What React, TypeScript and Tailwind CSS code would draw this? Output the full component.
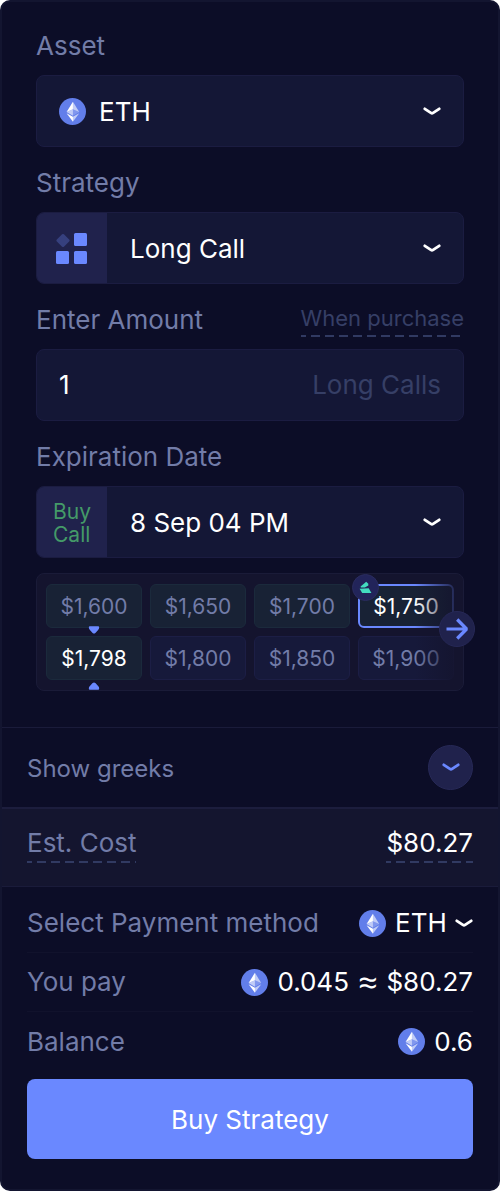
import { useState } from "react";
import type { ReactNode } from "react";

const STRIKES = [
  { price: "$1,600", tone: "green" },
  { price: "$1,650", tone: "green" },
  { price: "$1,700", tone: "green" },
  { price: "$1,750", tone: "active" },
  { price: "$1,798", tone: "spot" },
  { price: "$1,800", tone: "blue" },
  { price: "$1,850", tone: "blue" },
  { price: "$1,900", tone: "blue" },
];

const TONES: Record<string, string> = {
  green: "border border-[#1b2a3c] bg-[#182235] text-[#727ca8]",
  spot: "border border-[#1b2a3c] bg-[#182235] text-white",
  active: "border-2 border-[#6a88ff] bg-[#182235] text-white",
  blue: "border border-[#1c1e45] bg-[#16193a] text-[#727ca8]",
};

function EthIcon() {
  return (
    <svg viewBox="0 0 32 32" className="size-[27px] shrink-0" aria-hidden="true">
      <circle cx="16" cy="16" r="16" fill="#627eea" />
      <g fill="#fff">
        <path fillOpacity=".602" d="M16.498 4.5v8.87l7.497 3.35z" />
        <path d="M16.498 4.5L9 16.72l7.498-3.35z" />
        <path fillOpacity=".602" d="M16.498 22.3v5.9L24 18z" />
        <path d="M16.498 28.2v-5.9L9 18z" />
        <path fillOpacity=".2" d="M16.498 21.073l7.497-4.353-7.497-3.348z" />
        <path fillOpacity=".602" d="M9 16.72l7.498 4.353v-7.701z" />
      </g>
    </svg>
  );
}

function Chevron({ className = "" }: { className?: string }) {
  return (
    <svg viewBox="0 0 18 9" className={`h-[9px] w-[18px] shrink-0 ${className}`} fill="none" aria-hidden="true">
      <path
        d="M1.8 1.8 L7.9 5.9 Q9 6.6 10.1 5.9 L16.2 1.8"
        stroke="currentColor"
        strokeWidth="2.8"
        strokeLinecap="round"
        strokeLinejoin="round"
      />
    </svg>
  );
}

function StrategyIcon() {
  return (
    <svg viewBox="0 0 31 31" className="size-[31px]" aria-hidden="true">
      <rect x="2" y="2.5" width="10" height="10" rx="1.3" fill="#36407e" transform="rotate(45 7 7.5)" />
      <g fill="#6a88ff">
        <rect x="18" y="0" width="13" height="13" rx="1.5" />
        <rect x="0" y="18" width="13" height="13" rx="1.5" />
        <rect x="18" y="18" width="13" height="13" rx="1.5" />
      </g>
    </svg>
  );
}

function Marker({ className }: { className: string }) {
  return (
    <svg viewBox="0 0 11 8" className={`absolute left-1/2 h-2 w-[11px] -translate-x-1/2 ${className}`} aria-hidden="true">
      <path
        d="M1.5 0.3H9.5Q11 0.3 10.8 1.8Q10.6 2.8 9.6 3.9L6.9 6.9Q5.5 8.3 4.1 6.9L1.4 3.9Q0.4 2.8 0.2 1.8Q0 0.3 1.5 0.3Z"
        fill="#6a88ff"
      />
    </svg>
  );
}

function Dashes() {
  return (
    <span className="block h-[2px] bg-[repeating-linear-gradient(90deg,#313a62_0px_5px,transparent_5px_10px,#313a62_10px_14px)]" />
  );
}

function Picker({ id, value, lead, inset }: { id: string; value: string; lead: ReactNode; inset: string }) {
  return (
    <div className="flex h-[72px] overflow-hidden rounded-lg border border-[#1b1c41] bg-[#141736]">
      {lead}
      <div className="grid flex-1 items-center">
        <select
          id={id}
          defaultValue={value}
          className={`col-start-1 row-start-1 h-full w-full cursor-pointer appearance-none bg-transparent pt-[2px] text-white outline-none ${inset}`}
        >
          <option>{value}</option>
        </select>
        <Chevron className="pointer-events-none col-start-1 row-start-1 mr-[22px] justify-self-end text-white" />
      </div>
    </div>
  );
}

const LABEL = "block leading-[30px] text-[#727ca8]";
const LEAD = "flex w-[70px] shrink-0 items-center justify-center bg-[#20224c]";

export default function App() {
  const [selected, setSelected] = useState("$1,750");
  const [amount, setAmount] = useState("1");

  return (
    <main className="min-h-screen bg-white font-['Inter',sans-serif] text-[26px] leading-[30px]">
      <form
        className="min-h-screen rounded-[10px] border-2 border-[#131530] bg-[#0c0d27] pb-[29px]"
        onSubmit={(e) => e.preventDefault()}
      >
        <section className="flex flex-col gap-[21px] px-[34px] pt-[29px]">
          <div className="flex flex-col gap-[14px]">
            <label htmlFor="asset" className={LABEL}>Asset</label>
            <Picker
              id="asset"
              value="ETH"
              inset="pl-[13px]"
              lead={<span className="flex items-center pl-[22px]"><EthIcon /></span>}
            />
          </div>
          <div className="flex flex-col gap-[14px]">
            <label htmlFor="strategy" className={LABEL}>Strategy</label>
            <Picker
              id="strategy"
              value="Long Call"
              inset="pl-[23px]"
              lead={<span className={`${LEAD} pr-px`}><StrategyIcon /></span>}
            />
          </div>
          <div className="flex flex-col gap-[14px]">
            <div className="flex h-[30px] items-start justify-between">
              <label htmlFor="amount" className={LABEL}>Enter Amount</label>
              <button type="button" className="cursor-pointer text-[22px] leading-[26px] text-[#363f66]">
                <span className="block pb-[4px]">When purchase</span>
                <Dashes />
              </button>
            </div>
            <div className="flex h-[72px] items-center gap-4 rounded-lg border border-[#1b1c41] bg-[#141736] px-[22px]">
              <input
                id="amount"
                inputMode="numeric"
                value={amount}
                onChange={(e) => setAmount(e.target.value)}
                className="min-w-0 flex-1 bg-transparent text-white outline-none"
              />
              <span className="text-[#363f66]">Long Calls</span>
            </div>
          </div>
          <div className="flex flex-col gap-[14px]">
            <label htmlFor="expiry" className={LABEL}>Expiration Date</label>
            <Picker
              id="expiry"
              value="8 Sep 04 PM"
              inset="pl-[23px]"
              lead={
                <span className={`${LEAD} pt-[2px] text-[21px] leading-[23px] text-[#449a68]`}>
                  <span>Buy<br />Call</span>
                </span>
              }
            />
          </div>
        </section>

        <section className="px-[34px] pt-[15px] pb-9">
          <div className="relative rounded-lg border border-[#1a1b38] bg-[#14142e] px-[9px] py-[10px]">
            <div className="grid grid-cols-4 gap-2">
              {STRIKES.map((s) => {
                const tone = s.tone === "active" && selected !== s.price ? "green" : selected === s.price ? "active" : s.tone;
                return (
                  <div key={s.price} className="relative">
                    <button
                      type="button"
                      aria-pressed={selected === s.price}
                      onClick={() => setSelected(s.price)}
                      className={`h-11 w-full cursor-pointer rounded-md pt-px text-[21px] leading-6 ${TONES[tone]}`}
                    >
                      {s.price}
                    </button>
                    {s.tone === "spot" && (
                      <>
                        <Marker className="-top-[10px]" />
                        <Marker className="-bottom-[10px] rotate-180" />
                      </>
                    )}
                  </div>
                );
              })}
            </div>
            <div className="pointer-events-none absolute inset-y-0 right-0 w-12 rounded-r-lg bg-linear-to-r from-[#14142e]/0 to-[#14142e]" />
            <span className="absolute top-0 right-[84px] flex size-[27px] items-center justify-center rounded-full border border-[#2a2c5e] bg-[#22245a]">
              <svg viewBox="0 0 13 13" className="size-[13px]" aria-hidden="true">
                <path d="M1.6 5.6L7.2 0.7L9.3 2.7V4.4L5.8 6.4H1.9Z" fill="#43dcc0" />
                <path d="M0.6 7.8L9.7 7.2L12.4 12H3.2Z" fill="#43dcc0" />
              </svg>
            </span>
            <button
              type="button"
              aria-label="More strikes"
              className="absolute top-[37px] -right-3 flex size-9 cursor-pointer items-center justify-center rounded-full border border-[#262856] bg-[#20224c]"
            >
              <svg viewBox="0 0 22 22" className="size-[22px] shrink-0" fill="none" aria-hidden="true">
                <path d="M0.5 11H20M11.2 1.5L20.6 11L11.2 20.5" stroke="#6a88ff" strokeWidth="3.2" strokeLinejoin="bevel" />
              </svg>
            </button>
          </div>
        </section>

        <section className="flex h-20 items-center justify-between border-t border-[#1a1b3a] px-[25px]">
          <span className="mt-[2px] text-2xl leading-[30px] text-[#727ca8]">Show greeks</span>
          <button
            type="button"
            aria-label="Show greeks"
            className="flex size-[45px] cursor-pointer items-center justify-center rounded-full border border-[#272957] bg-[#20224c] text-[#6a88ff]"
          >
            <Chevron className="w-4" />
          </button>
        </section>

        <section className="flex h-20 items-center justify-between border-t-2 border-b border-t-[#1c1d3d] border-b-[#1a1b3a] bg-[#14152f] px-[25px] pb-1">
          <span className="text-[#727ca8]">
            <span className="block pb-[3px]">Est. Cost</span>
            <Dashes />
          </span>
          <span className="text-white">
            <span className="block pb-[3px]">$80.27</span>
            <Dashes />
          </span>
        </section>

        <section className="px-[25px] pt-[7px]">
          <div className="flex h-[59px] items-center justify-between border-b border-[#11122c]">
            <label htmlFor="payment" className={LABEL}>Select Payment method</label>
            <span className="flex items-center">
              <EthIcon />
              <select
                id="payment"
                defaultValue="ETH"
                className="-mr-[18px] cursor-pointer appearance-none bg-transparent pr-[26px] pl-[9px] text-white outline-none"
              >
                <option>ETH</option>
              </select>
              <Chevron className="pointer-events-none text-white" />
            </span>
          </div>
          <div className="flex h-[59px] items-center justify-between border-b border-[#11122c] text-white">
            <span className={LABEL}>You pay</span>
            <span className="flex items-center gap-[9px]">
              <EthIcon />
              <span className="flex items-center gap-[9px]">
                <span>0.045</span>
                <span className="font-['Open_Sans',sans-serif] text-[34px]">≈</span>
                <span>$80.27</span>
              </span>
            </span>
          </div>
          <div className="flex h-[59px] items-center justify-between text-white">
            <span className={LABEL}>Balance</span>
            <span className="flex items-center gap-[9px]">
              <EthIcon />
              <span>0.6</span>
            </span>
          </div>
          <button
            type="submit"
            className="mt-2 h-20 w-full cursor-pointer rounded-lg bg-[#6a88ff] pt-[2px] text-white"
          >
            Buy Strategy
          </button>
        </section>
      </form>
    </main>
  );
}
